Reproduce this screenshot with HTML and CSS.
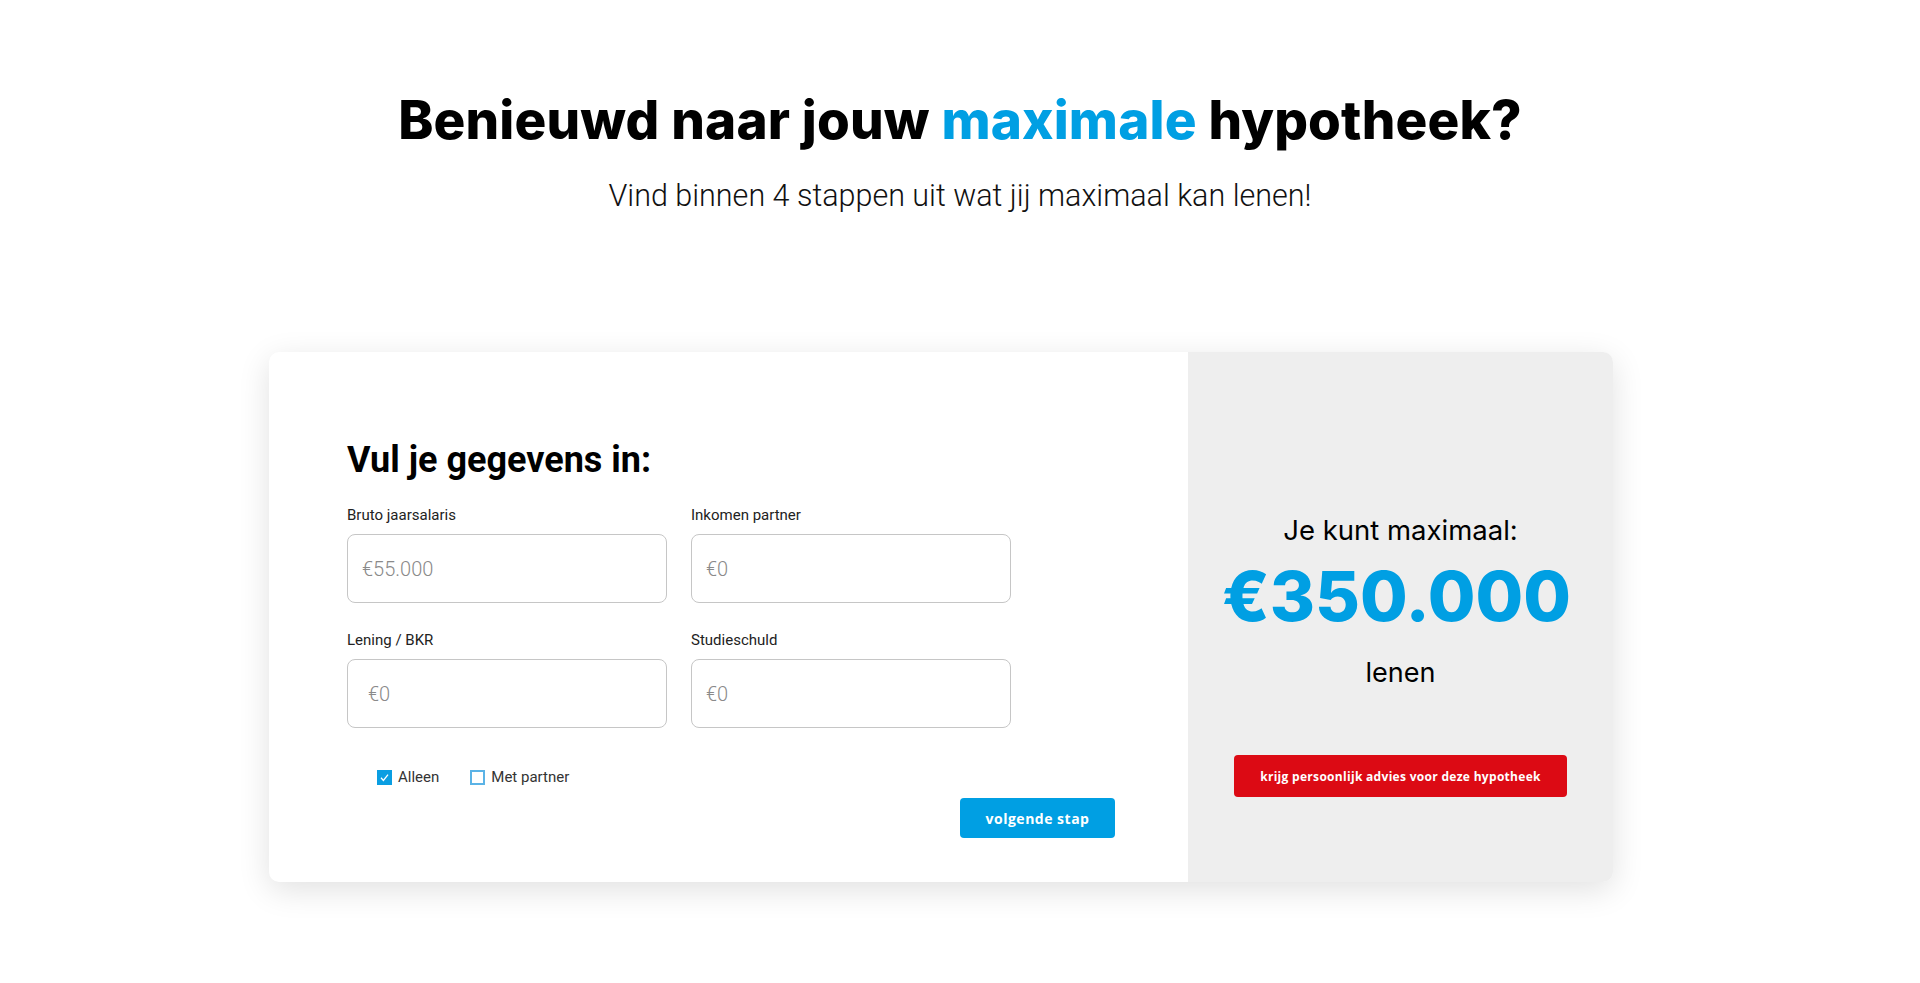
FILE: index.html
```html
<!DOCTYPE html>
<html lang="nl">
<head>
<meta charset="utf-8">
<title>Maximale hypotheek</title>
<link rel="stylesheet" href="styles.css">
</head>
<body>
<header class="hero">
  <h1 class="hero-title">Benieuwd naar jouw <span class="accent">maximale</span> hypotheek?</h1>
  <p class="hero-sub">Vind binnen 4 stappen uit wat jij maximaal kan lenen!</p>
</header>
<main class="calc">
  <section class="calc-form">
    <h2 class="form-title">Vul je gegevens in:</h2>
    <div class="fields">
      <label class="field">
        <span class="field-label">Bruto jaarsalaris</span>
        <input class="field-input" type="text" placeholder="€55.000">
      </label>
      <label class="field">
        <span class="field-label">Inkomen partner</span>
        <input class="field-input" type="text" placeholder="€0">
      </label>
      <label class="field">
        <span class="field-label">Lening / BKR</span>
        <input class="field-input field-input--wide" type="text" placeholder="€0">
      </label>
      <label class="field">
        <span class="field-label">Studieschuld</span>
        <input class="field-input" type="text" placeholder="€0">
      </label>
    </div>
    <div class="choices">
      <span class="choice">
        <span class="box box--checked">
          <svg viewBox="0 0 15 15" width="15" height="15"><path d="M4 7.8 L6.4 10.4 L11 4.6" fill="none" stroke="#fff" stroke-width="1.3"/></svg>
        </span>
        <span class="choice-text">Alleen</span>
      </span>
      <span class="choice">
        <span class="box"></span>
        <span class="choice-text">Met partner</span>
      </span>
    </div>
    <div class="actions">
      <button class="btn btn--next" type="button">volgende stap</button>
    </div>
  </section>
  <aside class="calc-result">
    <p class="result-lead">Je kunt maximaal:</p>
    <p class="result-amount">€350.000</p>
    <p class="result-tail">lenen</p>
    <button class="btn btn--advice" type="button">krijg persoonlijk advies voor deze hypotheek</button>
  </aside>
</main>
</body>
</html>
```

FILE: styles.css
```css
* { box-sizing: border-box; }

html, body {
  margin: 0;
  padding: 0;
  background: #ffffff;
}

body {
  font-family: Roboto, "Liberation Sans", Arial, sans-serif;
  color: #111;
  min-height: 983px;
}

.hero {
  padding-top: 90px;
  text-align: center;
}

.hero-title {
  margin: 0;
  font-family: Inter, "Liberation Sans", sans-serif;
  font-weight: 800;
  font-size: 53px;
  line-height: 60px;
  color: #000;
  letter-spacing: 0.15px;
}

.accent { color: #009fe3; }

.hero-sub {
  margin: 29px 0 0;
  font-family: Roboto, sans-serif;
  font-weight: 300;
  font-size: 30.5px;
  line-height: 34px;
  color: #111;
}

.calc {
  display: grid;
  grid-template-columns: 919px 425px;
  width: 1344px;
  height: 530px;
  margin: 139px 0 0 calc(50% - 691px);
  border-radius: 10px;
  box-shadow: 0 8px 32px rgba(0, 0, 0, 0.12);
  background: #fff;
}

.calc-form {
  padding: 88px 0 0 78px;
  display: flex;
  flex-direction: column;
}

.form-title {
  margin: 0;
  font-family: Roboto, sans-serif;
  font-weight: 700;
  font-size: 36px;
  line-height: 40px;
  color: #000;
}

.fields {
  margin-top: 26px;
  display: grid;
  grid-template-columns: 320px 320px;
  column-gap: 24px;
  row-gap: 28px;
}

.field {
  display: flex;
  flex-direction: column;
}

.field-label {
  font-size: 15px;
  line-height: 18px;
  color: #222;
}

.field-input {
  margin-top: 10px;
  height: 69px;
  width: 100%;
  border: 1px solid #c6c6c6;
  border-radius: 8px;
  padding: 0 0 0 14px;
  font-family: Roboto, sans-serif;
  font-weight: 300;
  font-size: 20px;
  color: #333;
  background: #fff;
  outline: none;
}

.field-input--wide { padding-left: 20px; }

.field-input::placeholder { color: #8a8a8a; }

.choices {
  margin-top: 40px;
  padding-left: 30px;
  display: flex;
  align-items: center;
  gap: 31px;
}

.choice {
  display: flex;
  align-items: center;
  gap: 6px;
}

.box {
  width: 15px;
  height: 15px;
  border: 2px solid #5bb3e6;
  background: #fff;
  display: flex;
}

.box--checked {
  border: none;
  background: #0a9ee2;
}

.choice-text {
  font-size: 15px;
  line-height: 18px;
  color: #333;
}

.actions {
  margin-top: 12px;
  display: flex;
  justify-content: flex-end;
  padding-right: 73px;
}

.btn {
  border: none;
  cursor: pointer;
  color: #fff;
  font-family: "Open Sans", sans-serif;
  font-weight: 700;
  border-radius: 4px;
}

.btn--next {
  width: 155px;
  height: 40px;
  background: #009fe3;
  font-size: 14px;
  letter-spacing: 0.5px;
}

.calc-result {
  background: #eeeeee;
  border-radius: 0 10px 10px 0;
  display: flex;
  flex-direction: column;
  align-items: center;
  padding-top: 162px;
}

.result-lead {
  margin: 0;
  font-family: Inter, sans-serif;
  font-weight: 400;
  font-size: 27.5px;
  line-height: 32px;
  color: #000;
}

.result-amount {
  margin: 10px 0 0;
  padding-right: 8px;
  font-family: Inter, sans-serif;
  font-weight: 800;
  font-size: 69px;
  line-height: 80px;
  color: #009fe3;
}

.result-tail {
  margin: 21px 0 0;
  font-family: Inter, sans-serif;
  font-weight: 400;
  font-size: 27px;
  line-height: 32px;
  color: #000;
}

.btn--advice {
  margin-top: 66px;
  width: 333px;
  height: 42px;
  background: #dc0a14;
  font-size: 12px;
  letter-spacing: 0.3px;
}
```
